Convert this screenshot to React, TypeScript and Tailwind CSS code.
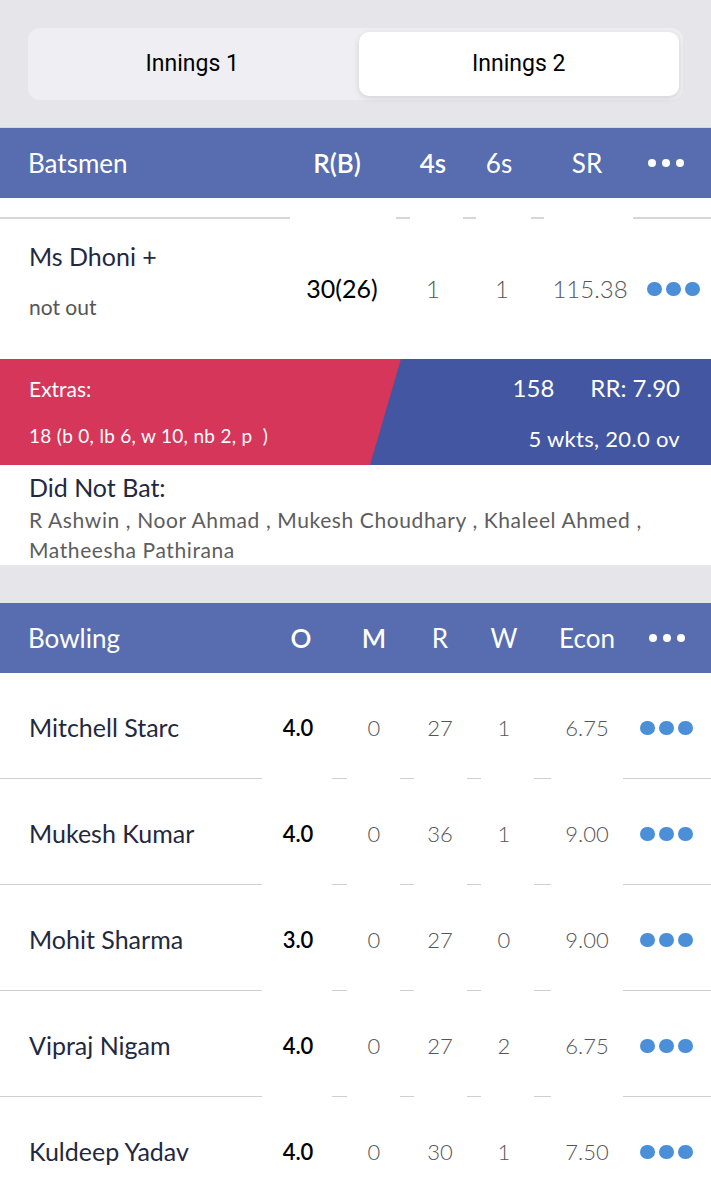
import React from "react";

const bowlers = [
  { name: "Mitchell Starc", o: "4.0", m: "0", r: "27", w: "1", econ: "6.75" },
  { name: "Mukesh Kumar", o: "4.0", m: "0", r: "36", w: "1", econ: "9.00" },
  { name: "Mohit Sharma", o: "3.0", m: "0", r: "27", w: "0", econ: "9.00" },
  { name: "Vipraj Nigam", o: "4.0", m: "0", r: "27", w: "2", econ: "6.75" },
  { name: "Kuldeep Yadav", o: "4.0", m: "0", r: "30", w: "1", econ: "7.50" },
];

function BlueDots() {
  return (
    <div className="flex items-center justify-center gap-[4px]">
      <span className="h-[14px] w-[15px] rounded-full bg-[#4a8fd8]" />
      <span className="h-[14px] w-[15px] rounded-full bg-[#4a8fd8]" />
      <span className="h-[14px] w-[15px] rounded-full bg-[#4a8fd8]" />
    </div>
  );
}

function WhiteDots() {
  return (
    <div className="flex items-center justify-center gap-[6px]">
      <span className="h-[8px] w-[8px] rounded-full bg-white" />
      <span className="h-[8px] w-[8px] rounded-full bg-white" />
      <span className="h-[8px] w-[8px] rounded-full bg-white" />
    </div>
  );
}

function BowlSeparator() {
  return (
    <div className="flex h-[1px] bg-white">
      <div className="w-[262px] bg-[#cfcfd3]" />
      <div className="w-[70px]" />
      <div className="w-[15px] bg-[#cfcfd3]" />
      <div className="w-[53px]" />
      <div className="w-[14px] bg-[#cfcfd3]" />
      <div className="w-[53px]" />
      <div className="w-[14px] bg-[#cfcfd3]" />
      <div className="w-[53px]" />
      <div className="w-[17px] bg-[#cfcfd3]" />
      <div className="w-[72px]" />
      <div className="flex-1 bg-[#cfcfd3]" />
    </div>
  );
}

function BatSeparator() {
  return (
    <div className="flex h-[2px] bg-white">
      <div className="w-[290px] bg-[#d6d6d9]" />
      <div className="w-[106px]" />
      <div className="w-[14px] bg-[#d6d6d9]" />
      <div className="w-[53px]" />
      <div className="w-[13px] bg-[#d6d6d9]" />
      <div className="w-[55px]" />
      <div className="w-[13px] bg-[#d6d6d9]" />
      <div className="w-[89px]" />
      <div className="flex-1 bg-[#d6d6d9]" />
    </div>
  );
}

const bowlGrid = "grid grid-cols-[262px_72px_80px_52px_76px_90px_1fr] items-center";
const batGrid = "grid grid-cols-[290px_100px_86px_52px_118px_1fr] items-center";

export default function App() {
  return (
    <div className="w-[711px] h-[1200px] overflow-hidden bg-white font-['Lato','Noto_Sans',sans-serif]">
      {/* innings tabs */}
      <div className="h-[128px] bg-[#e5e5ea] px-[28px] pt-[28px] border-b border-[#d3d6e4]">
        <div className="flex h-[72px] rounded-[12px] bg-[#efeff3] p-[4px] font-['Roboto',sans-serif] text-[23px] font-normal text-black">
          <div className="flex flex-1 items-center justify-center pr-[6px]">Innings 1</div>
          <div className="flex flex-1 items-center justify-center rounded-[10px] bg-white shadow-[0_2px_6px_rgba(0,0,0,0.12)]">
            Innings 2
          </div>
        </div>
      </div>

      {/* batsmen header */}
      <div className={`${batGrid} h-[70px] bg-[#586db0] text-[26px] text-white`}>
        <div className="pl-[28px]">Batsmen</div>
        <div className="text-center font-semibold pr-[6px]">R(B)</div>
        <div className="text-center font-semibold">4s</div>
        <div className="text-center pr-[6px]">6s</div>
        <div className="text-center">SR</div>
        <div className="pr-[26px]">
          <WhiteDots />
        </div>
      </div>
      <div className="h-[19px] bg-white" />
      <BatSeparator />

      {/* batsman row */}
      <div className={`${batGrid} h-[140px]`}>
        <div className="flex flex-col gap-[23px] self-start pt-[22px] pl-[29px]">
          <div className="text-[25px] leading-[30px] text-[#1f2940]">Ms Dhoni +</div>
          <div className="text-[21px] leading-[25px] text-[#555]">not out</div>
        </div>
        <div className="text-center text-[25px] text-black pl-[4px]">30(26)</div>
        <div className="text-center text-[24px] font-light text-[#555]">1</div>
        <div className="text-center text-[24px] font-light text-[#555]">1</div>
        <div className="text-center text-[24px] font-light text-[#555] pl-[6px]">115.38</div>
        <div className="pr-[10px]">
          <BlueDots />
        </div>
      </div>

      {/* extras / total banner */}
      <div className="flex h-[106px] bg-[#4356a1] text-white">
        <div className="flex w-[401px] flex-col justify-center gap-[22px] bg-[#d5365a] pl-[29px] [clip-path:polygon(0_0,100%_0,calc(100%-31px)_100%,0_100%)]">
          <div className="text-[21px] leading-[26px]">Extras:</div>
          <div className="text-[19px] leading-[24px] tracking-[0.3px]">18 (b 0, lb 6, w 10, nb 2, p&nbsp;&nbsp;)</div>
        </div>
        <div className="flex flex-1 flex-col items-end justify-center gap-[16px] pr-[31px]">
          <div className="flex gap-[36px] text-[24px]">
            <span>158</span>
            <span>RR: 7.90</span>
          </div>
          <div className="text-[22px] tracking-[0.3px]">5 wkts, 20.0 ov</div>
        </div>
      </div>

      {/* did not bat */}
      <div className="bg-white px-[29px] pt-[7px]">
        <div className="text-[25px] text-[#1f2940] leading-[30px]">Did Not Bat:</div>
        <div className="mt-[3px] text-[21px] leading-[30px] tracking-[0.6px] text-[#5d5d5d]">
          R Ashwin , Noor Ahmad , Mukesh Choudhary , Khaleel Ahmed , Matheesha Pathirana
        </div>
      </div>
      <div className="h-[38px] bg-[#e5e5ea]" />

      {/* bowling header */}
      <div className={`${bowlGrid} h-[70px] bg-[#586db0] text-[26px] text-white`}>
        <div className="pl-[28px]">Bowling</div>
        <div className="text-center font-semibold pl-[6px]">O</div>
        <div className="text-center font-semibold">M</div>
        <div className="text-center">R</div>
        <div className="text-center">W</div>
        <div className="text-center">Econ</div>
        <div className="pr-[10px]">
          <WhiteDots />
        </div>
      </div>

      {bowlers.map((b, i) => (
        <div key={i}>
          <div className={`${bowlGrid} h-[105px] pt-[4px]`}>
            <div className="pl-[29px] text-[25px] text-[#1f2940]">{b.name}</div>
            <div className="text-center text-[22px] font-semibold text-black">{b.o}</div>
            <div className="text-center text-[22px] font-light text-[#555]">{b.m}</div>
            <div className="text-center text-[22px] font-light text-[#555]">{b.r}</div>
            <div className="text-center text-[22px] font-light text-[#555]">{b.w}</div>
            <div className="text-center text-[22px] font-light text-[#555]">{b.econ}</div>
            <div className="pr-[10px]">
              <BlueDots />
            </div>
          </div>
          <BowlSeparator />
        </div>
      ))}
    </div>
  );
}
